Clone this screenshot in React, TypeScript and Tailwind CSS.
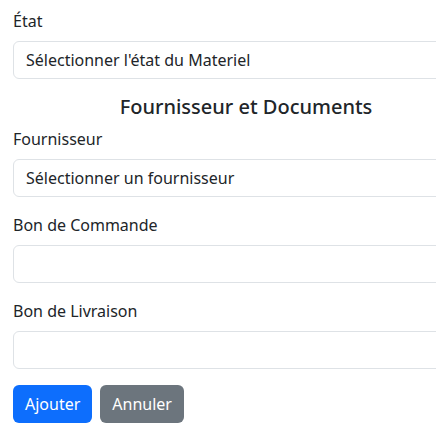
import React from 'react'

const labelCls = 'block mb-2 text-base leading-6 text-[#212529]'
const fieldCls =
  'block w-full h-[38px] px-3 border border-[#dee2e6] rounded-[6px] bg-white text-base text-[#212529] leading-6'

function SelectField({ label, placeholder }: { label: string; placeholder: string }) {
  return (
    <div className="mb-4">
      <label className={labelCls}>{label}</label>
      <div className={`${fieldCls} flex items-center justify-between`}>
        <span>{placeholder}</span>
        <svg width="16" height="16" viewBox="0 0 16 16" fill="none" stroke="#343a40" strokeWidth="2" strokeLinecap="round" strokeLinejoin="round">
          <path d="m2 5 6 6 6-6" />
        </svg>
      </div>
    </div>
  )
}

function FileField({ label }: { label: string }) {
  return (
    <div className="mb-4">
      <label className={labelCls}>{label}</label>
      <div className={fieldCls} />
    </div>
  )
}

export default function App() {
  return (
    <div className="w-[436px] h-[436px] overflow-hidden bg-white" style={{ fontFamily: '"Noto Sans", sans-serif' }}>
      <div className="w-[466px] ml-[13px] pt-[9px]">
        <SelectField label="État" placeholder="Sélectionner l'état du Materiel" />

        <h5 className="text-center text-[20px] font-medium leading-6 mb-2 text-[#212529]">
          Fournisseur et Documents
        </h5>

        <SelectField label="Fournisseur" placeholder="Sélectionner un fournisseur" />
        <FileField label="Bon de Commande" />
        <FileField label="Bon de Livraison" />

        <div className="flex gap-2">
          <button className="h-[38px] px-3 rounded-[6px] bg-[#0d6efd] text-white text-base">Ajouter</button>
          <button className="h-[38px] px-3 rounded-[6px] bg-[#6c757d] text-white text-base">Annuler</button>
        </div>
      </div>
    </div>
  )
}
